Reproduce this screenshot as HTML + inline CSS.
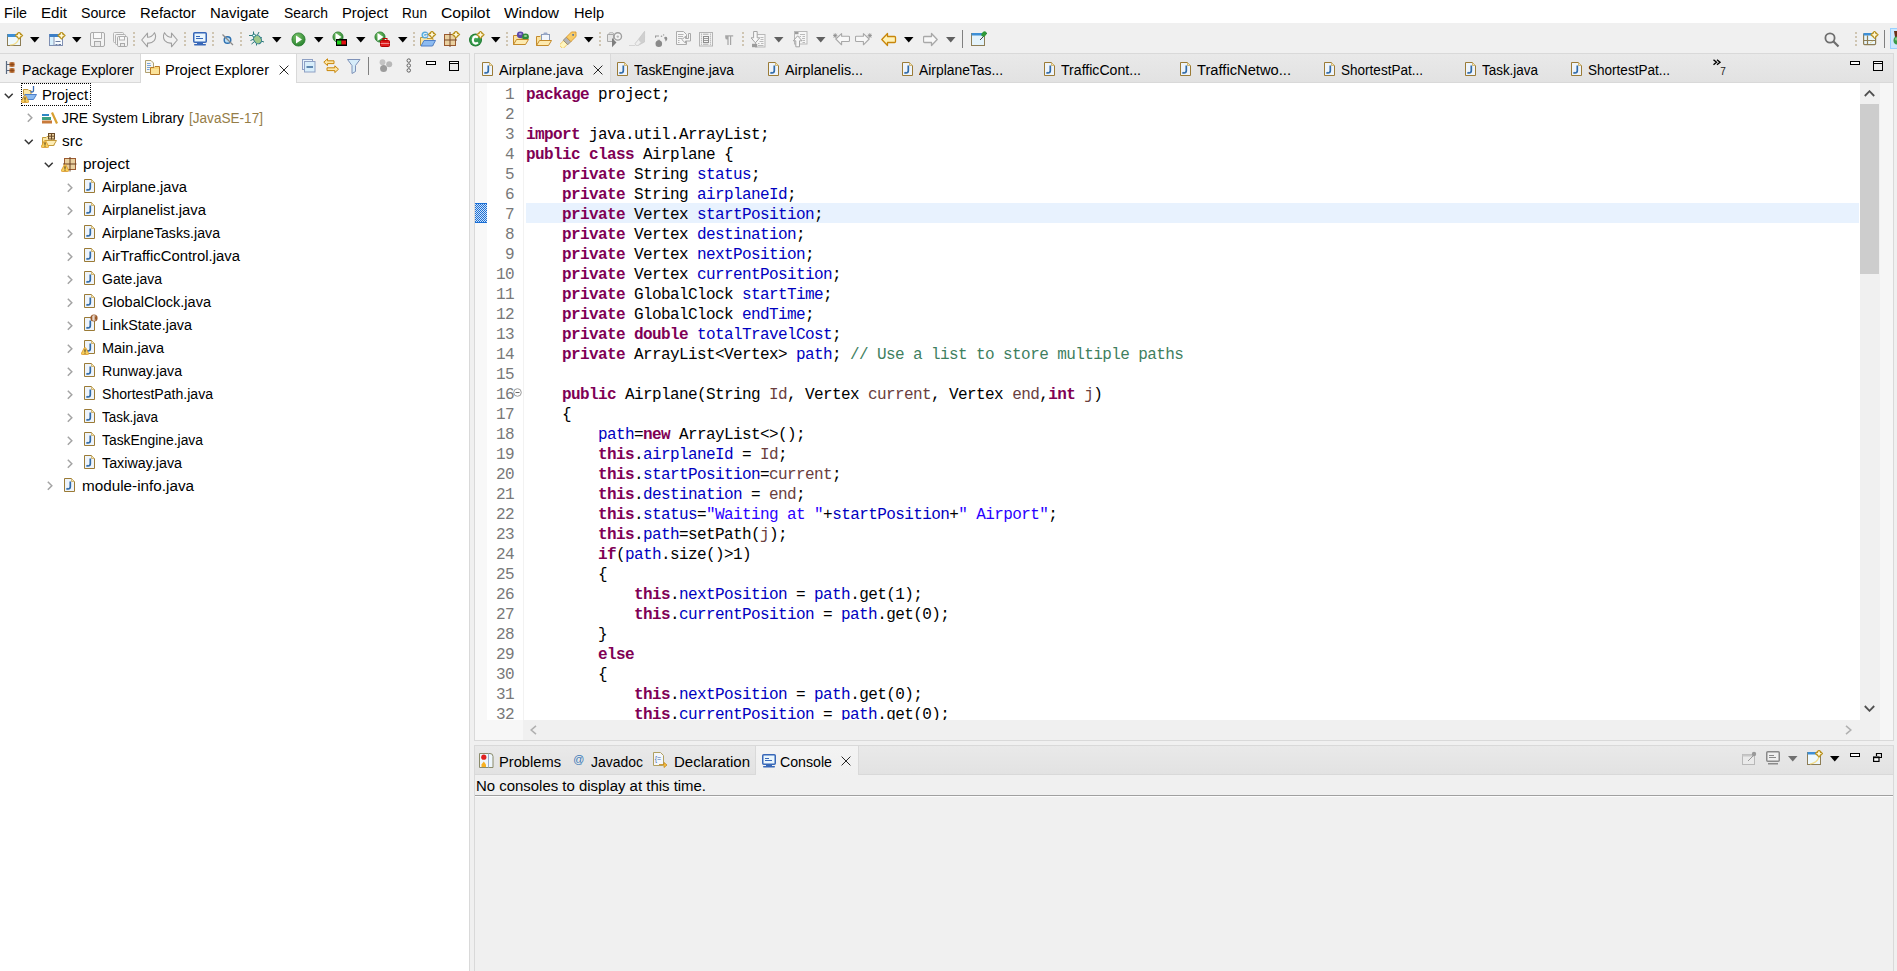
<!DOCTYPE html>
<html><head><meta charset="utf-8"><style>
html,body{margin:0;padding:0;width:1897px;height:971px;overflow:hidden;background:#f0f0f0;font-family:"Liberation Sans",sans-serif}
body>div,body>svg{position:absolute}
</style></head><body>
<div style="left:0px;top:0px;width:1897px;height:23px;background:#fff"></div>
<div style="left:4px;top:5px;font:normal 15.5px 'Liberation Sans';line-height:15.5px;color:#000;white-space:pre;transform:scaleX(0.9209);transform-origin:0 0">File</div>
<div style="left:41px;top:5px;font:normal 15.5px 'Liberation Sans';line-height:15.5px;color:#000;white-space:pre;transform:scaleX(0.9735);transform-origin:0 0">Edit</div>
<div style="left:81px;top:5px;font:normal 15.5px 'Liberation Sans';line-height:15.5px;color:#000;white-space:pre;transform:scaleX(0.9163);transform-origin:0 0">Source</div>
<div style="left:140px;top:5px;font:normal 15.5px 'Liberation Sans';line-height:15.5px;color:#000;white-space:pre;transform:scaleX(0.9560);transform-origin:0 0">Refactor</div>
<div style="left:210px;top:5px;font:normal 15.5px 'Liberation Sans';line-height:15.5px;color:#000;white-space:pre;transform:scaleX(0.9644);transform-origin:0 0">Navigate</div>
<div style="left:284px;top:5px;font:normal 15.5px 'Liberation Sans';line-height:15.5px;color:#000;white-space:pre;transform:scaleX(0.8959);transform-origin:0 0">Search</div>
<div style="left:342px;top:5px;font:normal 15.5px 'Liberation Sans';line-height:15.5px;color:#000;white-space:pre;transform:scaleX(0.9536);transform-origin:0 0">Project</div>
<div style="left:402px;top:5px;font:normal 15.5px 'Liberation Sans';line-height:15.5px;color:#000;white-space:pre;transform:scaleX(0.8792);transform-origin:0 0">Run</div>
<div style="left:441px;top:5px;font:normal 15.5px 'Liberation Sans';line-height:15.5px;color:#000;white-space:pre;transform:scaleX(1.0156);transform-origin:0 0">Copilot</div>
<div style="left:504px;top:5px;font:normal 15.5px 'Liberation Sans';line-height:15.5px;color:#000;white-space:pre;transform:scaleX(0.9977);transform-origin:0 0">Window</div>
<div style="left:574px;top:5px;font:normal 15.5px 'Liberation Sans';line-height:15.5px;color:#000;white-space:pre;transform:scaleX(0.9411);transform-origin:0 0">Help</div>
<div style="left:0px;top:23px;width:1897px;height:30px;background:#f0f0f0"></div>
<div style="left:0px;top:53px;width:470px;height:918px;background:#f0f0f0"></div>
<div style="left:0px;top:53px;width:470px;height:1px;background:#d9d9d9"></div>
<div style="left:469px;top:53px;width:1px;height:918px;background:#d9d9d9"></div>
<div style="left:0px;top:83px;width:469px;height:888px;background:#fff"></div>
<div style="left:0px;top:82px;width:469px;height:1px;background:#d9d9d9"></div>
<div style="left:140px;top:54px;width:1px;height:28px;background:#d9d9d9"></div>
<div style="left:141px;top:54px;width:155px;height:29px;background:#fff"></div>
<div style="left:296px;top:54px;width:1px;height:28px;background:#d9d9d9"></div>
<div style="left:22px;top:62px;font:normal 15.5px 'Liberation Sans';line-height:15.5px;color:#000;white-space:pre;transform:scaleX(0.9155);transform-origin:0 0">Package Explorer</div>
<div style="left:165px;top:62px;font:normal 15.5px 'Liberation Sans';line-height:15.5px;color:#000;white-space:pre;transform:scaleX(0.9432);transform-origin:0 0">Project Explorer</div>
<div style="left:474px;top:53px;width:1420px;height:688px;background:#d9d9d9"></div>
<div style="left:475px;top:54px;width:1418px;height:686px;background:#e8e8e8"></div>
<div style="left:475px;top:54px;width:1418px;height:28px;background:linear-gradient(#e9e9e9,#e2e2e2)"></div>
<div style="left:475px;top:83px;width:1418px;height:657px;background:#f7f7f7"></div>
<div style="left:475px;top:54px;width:135px;height:29px;background:#f0f0f0"></div>
<div style="left:610px;top:54px;width:1px;height:28px;background:#d9d9d9"></div>
<div style="left:475px;top:82px;width:1418px;height:1px;background:#d9d9d9"></div>
<div style="left:475px;top:83px;width:12px;height:637px;background:#f8f8f8"></div>
<div style="left:487px;top:83px;width:36px;height:637px;background:#fff"></div>
<div style="left:523px;top:83px;width:1px;height:637px;background:#f2f2f2"></div>
<div style="left:524px;top:83px;width:1336px;height:637px;background:#fff"></div>
<div style="left:526px;top:203px;width:1333px;height:20px;background:#e8f2fe"></div>
<div style="left:523px;top:720px;width:1337px;height:20px;background:#f0f0f0"></div>
<div style="left:1860px;top:83px;width:20px;height:657px;background:#f0f0f0"></div>
<div style="left:1860px;top:104px;width:19px;height:170px;background:#cdcdcd"></div>
<div style="left:1880px;top:83px;width:13px;height:657px;background:#f6f6f6"></div>
<div style="left:499px;top:62px;font:normal 15.5px 'Liberation Sans';line-height:15.5px;color:#000;white-space:pre;transform:scaleX(0.9374);transform-origin:0 0">Airplane.java</div>
<div style="left:634px;top:62px;font:normal 15.5px 'Liberation Sans';line-height:15.5px;color:#000;white-space:pre;transform:scaleX(0.8859);transform-origin:0 0">TaskEngine.java</div>
<div style="left:785px;top:62px;font:normal 15.5px 'Liberation Sans';line-height:15.5px;color:#000;white-space:pre;transform:scaleX(0.9239);transform-origin:0 0">Airplanelis...</div>
<div style="left:919px;top:62px;font:normal 15.5px 'Liberation Sans';line-height:15.5px;color:#000;white-space:pre;transform:scaleX(0.8945);transform-origin:0 0">AirplaneTas...</div>
<div style="left:1061px;top:62px;font:normal 15.5px 'Liberation Sans';line-height:15.5px;color:#000;white-space:pre;transform:scaleX(0.9105);transform-origin:0 0">TrafficCont...</div>
<div style="left:1197px;top:62px;font:normal 15.5px 'Liberation Sans';line-height:15.5px;color:#000;white-space:pre;transform:scaleX(0.9490);transform-origin:0 0">TrafficNetwo...</div>
<div style="left:1341px;top:62px;font:normal 15.5px 'Liberation Sans';line-height:15.5px;color:#000;white-space:pre;transform:scaleX(0.8732);transform-origin:0 0">ShortestPat...</div>
<div style="left:1482px;top:62px;font:normal 15.5px 'Liberation Sans';line-height:15.5px;color:#000;white-space:pre;transform:scaleX(0.8667);transform-origin:0 0">Task.java</div>
<div style="left:1588px;top:62px;font:normal 15.5px 'Liberation Sans';line-height:15.5px;color:#000;white-space:pre;transform:scaleX(0.8732);transform-origin:0 0">ShortestPat...</div>
<div style="left:474px;top:745px;width:1420px;height:226px;background:#d9d9d9"></div>
<div style="left:475px;top:746px;width:1418px;height:225px;background:#f0f0f0"></div>
<div style="left:475px;top:746px;width:1418px;height:29px;background:linear-gradient(#e9e9e9,#e2e2e2)"></div>
<div style="left:475px;top:774px;width:1418px;height:1px;background:#d9d9d9"></div>
<div style="left:755px;top:746px;width:1px;height:28px;background:#d9d9d9"></div>
<div style="left:858px;top:746px;width:1px;height:28px;background:#d9d9d9"></div>
<div style="left:756px;top:746px;width:102px;height:29px;background:linear-gradient(#f3f3f3,#f0f0f0)"></div>
<div style="left:475px;top:795px;width:1418px;height:1px;background:#a0a0a0"></div>
<div style="left:475px;top:796px;width:1418px;height:1px;background:#fcfcfc"></div>
<div style="left:499px;top:754px;font:normal 15.5px 'Liberation Sans';line-height:15.5px;color:#000;white-space:pre;transform:scaleX(0.9471);transform-origin:0 0">Problems</div>
<div style="left:591px;top:754px;font:normal 15.5px 'Liberation Sans';line-height:15.5px;color:#000;white-space:pre;transform:scaleX(0.9007);transform-origin:0 0">Javadoc</div>
<div style="left:674px;top:754px;font:normal 15.5px 'Liberation Sans';line-height:15.5px;color:#000;white-space:pre;transform:scaleX(0.9694);transform-origin:0 0">Declaration</div>
<div style="left:780px;top:754px;font:normal 15.5px 'Liberation Sans';line-height:15.5px;color:#000;white-space:pre;transform:scaleX(0.9144);transform-origin:0 0">Console</div>
<div style="left:476px;top:778px;font:normal 15.5px 'Liberation Sans';line-height:15.5px;color:#000;white-space:pre;transform:scaleX(0.9638);transform-origin:0 0">No consoles to display at this time.</div>
<div style="left:42px;top:87px;font:normal 15.5px 'Liberation Sans';line-height:15.5px;color:#000;white-space:pre;transform:scaleX(0.9536);transform-origin:0 0">Project</div>
<div style="left:62px;top:110px;font:normal 15.5px 'Liberation Sans';line-height:15.5px;color:#000;white-space:pre;transform:scaleX(0.8908);transform-origin:0 0">JRE System Library</div>
<div style="left:62px;top:133px;font:normal 15.5px 'Liberation Sans';line-height:15.5px;color:#000;white-space:pre">src</div>
<div style="left:83px;top:156px;font:normal 15.5px 'Liberation Sans';line-height:15.5px;color:#000;white-space:pre">project</div>
<div style="left:102px;top:179px;font:normal 15.5px 'Liberation Sans';line-height:15.5px;color:#000;white-space:pre;transform:scaleX(0.9486);transform-origin:0 0">Airplane.java</div>
<div style="left:102px;top:202px;font:normal 15.5px 'Liberation Sans';line-height:15.5px;color:#000;white-space:pre;transform:scaleX(0.9581);transform-origin:0 0">Airplanelist.java</div>
<div style="left:102px;top:225px;font:normal 15.5px 'Liberation Sans';line-height:15.5px;color:#000;white-space:pre;transform:scaleX(0.9131);transform-origin:0 0">AirplaneTasks.java</div>
<div style="left:102px;top:248px;font:normal 15.5px 'Liberation Sans';line-height:15.5px;color:#000;white-space:pre;transform:scaleX(0.9593);transform-origin:0 0">AirTrafficControl.java</div>
<div style="left:102px;top:271px;font:normal 15.5px 'Liberation Sans';line-height:15.5px;color:#000;white-space:pre;transform:scaleX(0.9044);transform-origin:0 0">Gate.java</div>
<div style="left:102px;top:294px;font:normal 15.5px 'Liberation Sans';line-height:15.5px;color:#000;white-space:pre;transform:scaleX(0.9372);transform-origin:0 0">GlobalClock.java</div>
<div style="left:102px;top:317px;font:normal 15.5px 'Liberation Sans';line-height:15.5px;color:#000;white-space:pre;transform:scaleX(0.9243);transform-origin:0 0">LinkState.java</div>
<div style="left:102px;top:340px;font:normal 15.5px 'Liberation Sans';line-height:15.5px;color:#000;white-space:pre;transform:scaleX(0.9346);transform-origin:0 0">Main.java</div>
<div style="left:102px;top:363px;font:normal 15.5px 'Liberation Sans';line-height:15.5px;color:#000;white-space:pre;transform:scaleX(0.9134);transform-origin:0 0">Runway.java</div>
<div style="left:102px;top:386px;font:normal 15.5px 'Liberation Sans';line-height:15.5px;color:#000;white-space:pre;transform:scaleX(0.9072);transform-origin:0 0">ShortestPath.java</div>
<div style="left:102px;top:409px;font:normal 15.5px 'Liberation Sans';line-height:15.5px;color:#000;white-space:pre;transform:scaleX(0.8667);transform-origin:0 0">Task.java</div>
<div style="left:102px;top:432px;font:normal 15.5px 'Liberation Sans';line-height:15.5px;color:#000;white-space:pre;transform:scaleX(0.8948);transform-origin:0 0">TaskEngine.java</div>
<div style="left:102px;top:455px;font:normal 15.5px 'Liberation Sans';line-height:15.5px;color:#000;white-space:pre;transform:scaleX(0.9225);transform-origin:0 0">Taxiway.java</div>
<div style="left:82px;top:478px;font:normal 15.5px 'Liberation Sans';line-height:15.5px;color:#000;white-space:pre;transform:scaleX(0.9848);transform-origin:0 0">module-info.java</div>
<div style="left:189px;top:110px;font:normal 15.5px 'Liberation Sans';line-height:15.5px;color:#957d47;white-space:pre;transform:scaleX(0.8764);transform-origin:0 0">[JavaSE-17]</div>
<div style="left:475px;top:83px;width:1385px;height:637px;overflow:hidden"><div style="position:absolute;left:51px;top:2px;height:20px;white-space:pre;font-family:'Liberation Mono';font-size:16px;letter-spacing:-0.6px;line-height:20px"><span style="color:#7f0055;font-weight:bold">package</span><span style="color:#000"> project;</span></div><div style="position:absolute;left:30px;top:2px;white-space:pre;color:#787878;font-family:'Liberation Mono';font-size:16px;letter-spacing:-0.6px;line-height:20px">1</div><div style="position:absolute;left:51px;top:22px;height:20px;white-space:pre;font-family:'Liberation Mono';font-size:16px;letter-spacing:-0.6px;line-height:20px"></div><div style="position:absolute;left:30px;top:22px;white-space:pre;color:#787878;font-family:'Liberation Mono';font-size:16px;letter-spacing:-0.6px;line-height:20px">2</div><div style="position:absolute;left:51px;top:42px;height:20px;white-space:pre;font-family:'Liberation Mono';font-size:16px;letter-spacing:-0.6px;line-height:20px"><span style="color:#7f0055;font-weight:bold">import</span><span style="color:#000"> java.util.ArrayList;</span></div><div style="position:absolute;left:30px;top:42px;white-space:pre;color:#787878;font-family:'Liberation Mono';font-size:16px;letter-spacing:-0.6px;line-height:20px">3</div><div style="position:absolute;left:51px;top:62px;height:20px;white-space:pre;font-family:'Liberation Mono';font-size:16px;letter-spacing:-0.6px;line-height:20px"><span style="color:#7f0055;font-weight:bold">public</span><span style="color:#000"> </span><span style="color:#7f0055;font-weight:bold">class</span><span style="color:#000"> Airplane {</span></div><div style="position:absolute;left:30px;top:62px;white-space:pre;color:#787878;font-family:'Liberation Mono';font-size:16px;letter-spacing:-0.6px;line-height:20px">4</div><div style="position:absolute;left:51px;top:82px;height:20px;white-space:pre;font-family:'Liberation Mono';font-size:16px;letter-spacing:-0.6px;line-height:20px"><span style="color:#000">    </span><span style="color:#7f0055;font-weight:bold">private</span><span style="color:#000"> String </span><span style="color:#0000c0">status</span><span style="color:#000">;</span></div><div style="position:absolute;left:30px;top:82px;white-space:pre;color:#787878;font-family:'Liberation Mono';font-size:16px;letter-spacing:-0.6px;line-height:20px">5</div><div style="position:absolute;left:51px;top:102px;height:20px;white-space:pre;font-family:'Liberation Mono';font-size:16px;letter-spacing:-0.6px;line-height:20px"><span style="color:#000">    </span><span style="color:#7f0055;font-weight:bold">private</span><span style="color:#000"> String </span><span style="color:#0000c0">airplaneId</span><span style="color:#000">;</span></div><div style="position:absolute;left:30px;top:102px;white-space:pre;color:#787878;font-family:'Liberation Mono';font-size:16px;letter-spacing:-0.6px;line-height:20px">6</div><div style="position:absolute;left:51px;top:122px;height:20px;white-space:pre;font-family:'Liberation Mono';font-size:16px;letter-spacing:-0.6px;line-height:20px"><span style="color:#000">    </span><span style="color:#7f0055;font-weight:bold">private</span><span style="color:#000"> Vertex </span><span style="color:#0000c0">startPosition</span><span style="color:#000">;</span></div><div style="position:absolute;left:30px;top:122px;white-space:pre;color:#787878;font-family:'Liberation Mono';font-size:16px;letter-spacing:-0.6px;line-height:20px">7</div><div style="position:absolute;left:51px;top:142px;height:20px;white-space:pre;font-family:'Liberation Mono';font-size:16px;letter-spacing:-0.6px;line-height:20px"><span style="color:#000">    </span><span style="color:#7f0055;font-weight:bold">private</span><span style="color:#000"> Vertex </span><span style="color:#0000c0">destination</span><span style="color:#000">;</span></div><div style="position:absolute;left:30px;top:142px;white-space:pre;color:#787878;font-family:'Liberation Mono';font-size:16px;letter-spacing:-0.6px;line-height:20px">8</div><div style="position:absolute;left:51px;top:162px;height:20px;white-space:pre;font-family:'Liberation Mono';font-size:16px;letter-spacing:-0.6px;line-height:20px"><span style="color:#000">    </span><span style="color:#7f0055;font-weight:bold">private</span><span style="color:#000"> Vertex </span><span style="color:#0000c0">nextPosition</span><span style="color:#000">;</span></div><div style="position:absolute;left:30px;top:162px;white-space:pre;color:#787878;font-family:'Liberation Mono';font-size:16px;letter-spacing:-0.6px;line-height:20px">9</div><div style="position:absolute;left:51px;top:182px;height:20px;white-space:pre;font-family:'Liberation Mono';font-size:16px;letter-spacing:-0.6px;line-height:20px"><span style="color:#000">    </span><span style="color:#7f0055;font-weight:bold">private</span><span style="color:#000"> Vertex </span><span style="color:#0000c0">currentPosition</span><span style="color:#000">;</span></div><div style="position:absolute;left:21px;top:182px;white-space:pre;color:#787878;font-family:'Liberation Mono';font-size:16px;letter-spacing:-0.6px;line-height:20px">10</div><div style="position:absolute;left:51px;top:202px;height:20px;white-space:pre;font-family:'Liberation Mono';font-size:16px;letter-spacing:-0.6px;line-height:20px"><span style="color:#000">    </span><span style="color:#7f0055;font-weight:bold">private</span><span style="color:#000"> GlobalClock </span><span style="color:#0000c0">startTime</span><span style="color:#000">;</span></div><div style="position:absolute;left:21px;top:202px;white-space:pre;color:#787878;font-family:'Liberation Mono';font-size:16px;letter-spacing:-0.6px;line-height:20px">11</div><div style="position:absolute;left:51px;top:222px;height:20px;white-space:pre;font-family:'Liberation Mono';font-size:16px;letter-spacing:-0.6px;line-height:20px"><span style="color:#000">    </span><span style="color:#7f0055;font-weight:bold">private</span><span style="color:#000"> GlobalClock </span><span style="color:#0000c0">endTime</span><span style="color:#000">;</span></div><div style="position:absolute;left:21px;top:222px;white-space:pre;color:#787878;font-family:'Liberation Mono';font-size:16px;letter-spacing:-0.6px;line-height:20px">12</div><div style="position:absolute;left:51px;top:242px;height:20px;white-space:pre;font-family:'Liberation Mono';font-size:16px;letter-spacing:-0.6px;line-height:20px"><span style="color:#000">    </span><span style="color:#7f0055;font-weight:bold">private</span><span style="color:#000"> </span><span style="color:#7f0055;font-weight:bold">double</span><span style="color:#000"> </span><span style="color:#0000c0">totalTravelCost</span><span style="color:#000">;</span></div><div style="position:absolute;left:21px;top:242px;white-space:pre;color:#787878;font-family:'Liberation Mono';font-size:16px;letter-spacing:-0.6px;line-height:20px">13</div><div style="position:absolute;left:51px;top:262px;height:20px;white-space:pre;font-family:'Liberation Mono';font-size:16px;letter-spacing:-0.6px;line-height:20px"><span style="color:#000">    </span><span style="color:#7f0055;font-weight:bold">private</span><span style="color:#000"> ArrayList&lt;Vertex&gt; </span><span style="color:#0000c0">path</span><span style="color:#000">; </span><span style="color:#3f7f5f">// Use a list to store multiple paths</span></div><div style="position:absolute;left:21px;top:262px;white-space:pre;color:#787878;font-family:'Liberation Mono';font-size:16px;letter-spacing:-0.6px;line-height:20px">14</div><div style="position:absolute;left:51px;top:282px;height:20px;white-space:pre;font-family:'Liberation Mono';font-size:16px;letter-spacing:-0.6px;line-height:20px"></div><div style="position:absolute;left:21px;top:282px;white-space:pre;color:#787878;font-family:'Liberation Mono';font-size:16px;letter-spacing:-0.6px;line-height:20px">15</div><div style="position:absolute;left:51px;top:302px;height:20px;white-space:pre;font-family:'Liberation Mono';font-size:16px;letter-spacing:-0.6px;line-height:20px"><span style="color:#000">    </span><span style="color:#7f0055;font-weight:bold">public</span><span style="color:#000"> Airplane(String </span><span style="color:#6a3e3e">Id</span><span style="color:#000">, Vertex </span><span style="color:#6a3e3e">current</span><span style="color:#000">, Vertex </span><span style="color:#6a3e3e">end</span><span style="color:#000">,</span><span style="color:#7f0055;font-weight:bold">int</span><span style="color:#000"> </span><span style="color:#6a3e3e">j</span><span style="color:#000">)</span></div><div style="position:absolute;left:21px;top:302px;white-space:pre;color:#787878;font-family:'Liberation Mono';font-size:16px;letter-spacing:-0.6px;line-height:20px">16</div><div style="position:absolute;left:51px;top:322px;height:20px;white-space:pre;font-family:'Liberation Mono';font-size:16px;letter-spacing:-0.6px;line-height:20px"><span style="color:#000">    {</span></div><div style="position:absolute;left:21px;top:322px;white-space:pre;color:#787878;font-family:'Liberation Mono';font-size:16px;letter-spacing:-0.6px;line-height:20px">17</div><div style="position:absolute;left:51px;top:342px;height:20px;white-space:pre;font-family:'Liberation Mono';font-size:16px;letter-spacing:-0.6px;line-height:20px"><span style="color:#000">        </span><span style="color:#0000c0">path</span><span style="color:#000">=</span><span style="color:#7f0055;font-weight:bold">new</span><span style="color:#000"> ArrayList&lt;&gt;();</span></div><div style="position:absolute;left:21px;top:342px;white-space:pre;color:#787878;font-family:'Liberation Mono';font-size:16px;letter-spacing:-0.6px;line-height:20px">18</div><div style="position:absolute;left:51px;top:362px;height:20px;white-space:pre;font-family:'Liberation Mono';font-size:16px;letter-spacing:-0.6px;line-height:20px"><span style="color:#000">        </span><span style="color:#7f0055;font-weight:bold">this</span><span style="color:#000">.</span><span style="color:#0000c0">airplaneId</span><span style="color:#000"> = </span><span style="color:#6a3e3e">Id</span><span style="color:#000">;</span></div><div style="position:absolute;left:21px;top:362px;white-space:pre;color:#787878;font-family:'Liberation Mono';font-size:16px;letter-spacing:-0.6px;line-height:20px">19</div><div style="position:absolute;left:51px;top:382px;height:20px;white-space:pre;font-family:'Liberation Mono';font-size:16px;letter-spacing:-0.6px;line-height:20px"><span style="color:#000">        </span><span style="color:#7f0055;font-weight:bold">this</span><span style="color:#000">.</span><span style="color:#0000c0">startPosition</span><span style="color:#000">=</span><span style="color:#6a3e3e">current</span><span style="color:#000">;</span></div><div style="position:absolute;left:21px;top:382px;white-space:pre;color:#787878;font-family:'Liberation Mono';font-size:16px;letter-spacing:-0.6px;line-height:20px">20</div><div style="position:absolute;left:51px;top:402px;height:20px;white-space:pre;font-family:'Liberation Mono';font-size:16px;letter-spacing:-0.6px;line-height:20px"><span style="color:#000">        </span><span style="color:#7f0055;font-weight:bold">this</span><span style="color:#000">.</span><span style="color:#0000c0">destination</span><span style="color:#000"> = </span><span style="color:#6a3e3e">end</span><span style="color:#000">;</span></div><div style="position:absolute;left:21px;top:402px;white-space:pre;color:#787878;font-family:'Liberation Mono';font-size:16px;letter-spacing:-0.6px;line-height:20px">21</div><div style="position:absolute;left:51px;top:422px;height:20px;white-space:pre;font-family:'Liberation Mono';font-size:16px;letter-spacing:-0.6px;line-height:20px"><span style="color:#000">        </span><span style="color:#7f0055;font-weight:bold">this</span><span style="color:#000">.</span><span style="color:#0000c0">status</span><span style="color:#000">=</span><span style="color:#2a00ff">&quot;Waiting at &quot;</span><span style="color:#000">+</span><span style="color:#0000c0">startPosition</span><span style="color:#000">+</span><span style="color:#2a00ff">&quot; Airport&quot;</span><span style="color:#000">;</span></div><div style="position:absolute;left:21px;top:422px;white-space:pre;color:#787878;font-family:'Liberation Mono';font-size:16px;letter-spacing:-0.6px;line-height:20px">22</div><div style="position:absolute;left:51px;top:442px;height:20px;white-space:pre;font-family:'Liberation Mono';font-size:16px;letter-spacing:-0.6px;line-height:20px"><span style="color:#000">        </span><span style="color:#7f0055;font-weight:bold">this</span><span style="color:#000">.</span><span style="color:#0000c0">path</span><span style="color:#000">=setPath(</span><span style="color:#6a3e3e">j</span><span style="color:#000">);</span></div><div style="position:absolute;left:21px;top:442px;white-space:pre;color:#787878;font-family:'Liberation Mono';font-size:16px;letter-spacing:-0.6px;line-height:20px">23</div><div style="position:absolute;left:51px;top:462px;height:20px;white-space:pre;font-family:'Liberation Mono';font-size:16px;letter-spacing:-0.6px;line-height:20px"><span style="color:#000">        </span><span style="color:#7f0055;font-weight:bold">if</span><span style="color:#000">(</span><span style="color:#0000c0">path</span><span style="color:#000">.size()&gt;1)</span></div><div style="position:absolute;left:21px;top:462px;white-space:pre;color:#787878;font-family:'Liberation Mono';font-size:16px;letter-spacing:-0.6px;line-height:20px">24</div><div style="position:absolute;left:51px;top:482px;height:20px;white-space:pre;font-family:'Liberation Mono';font-size:16px;letter-spacing:-0.6px;line-height:20px"><span style="color:#000">        {</span></div><div style="position:absolute;left:21px;top:482px;white-space:pre;color:#787878;font-family:'Liberation Mono';font-size:16px;letter-spacing:-0.6px;line-height:20px">25</div><div style="position:absolute;left:51px;top:502px;height:20px;white-space:pre;font-family:'Liberation Mono';font-size:16px;letter-spacing:-0.6px;line-height:20px"><span style="color:#000">            </span><span style="color:#7f0055;font-weight:bold">this</span><span style="color:#000">.</span><span style="color:#0000c0">nextPosition</span><span style="color:#000"> = </span><span style="color:#0000c0">path</span><span style="color:#000">.get(1);</span></div><div style="position:absolute;left:21px;top:502px;white-space:pre;color:#787878;font-family:'Liberation Mono';font-size:16px;letter-spacing:-0.6px;line-height:20px">26</div><div style="position:absolute;left:51px;top:522px;height:20px;white-space:pre;font-family:'Liberation Mono';font-size:16px;letter-spacing:-0.6px;line-height:20px"><span style="color:#000">            </span><span style="color:#7f0055;font-weight:bold">this</span><span style="color:#000">.</span><span style="color:#0000c0">currentPosition</span><span style="color:#000"> = </span><span style="color:#0000c0">path</span><span style="color:#000">.get(0);</span></div><div style="position:absolute;left:21px;top:522px;white-space:pre;color:#787878;font-family:'Liberation Mono';font-size:16px;letter-spacing:-0.6px;line-height:20px">27</div><div style="position:absolute;left:51px;top:542px;height:20px;white-space:pre;font-family:'Liberation Mono';font-size:16px;letter-spacing:-0.6px;line-height:20px"><span style="color:#000">        }</span></div><div style="position:absolute;left:21px;top:542px;white-space:pre;color:#787878;font-family:'Liberation Mono';font-size:16px;letter-spacing:-0.6px;line-height:20px">28</div><div style="position:absolute;left:51px;top:562px;height:20px;white-space:pre;font-family:'Liberation Mono';font-size:16px;letter-spacing:-0.6px;line-height:20px"><span style="color:#000">        </span><span style="color:#7f0055;font-weight:bold">else</span></div><div style="position:absolute;left:21px;top:562px;white-space:pre;color:#787878;font-family:'Liberation Mono';font-size:16px;letter-spacing:-0.6px;line-height:20px">29</div><div style="position:absolute;left:51px;top:582px;height:20px;white-space:pre;font-family:'Liberation Mono';font-size:16px;letter-spacing:-0.6px;line-height:20px"><span style="color:#000">        {</span></div><div style="position:absolute;left:21px;top:582px;white-space:pre;color:#787878;font-family:'Liberation Mono';font-size:16px;letter-spacing:-0.6px;line-height:20px">30</div><div style="position:absolute;left:51px;top:602px;height:20px;white-space:pre;font-family:'Liberation Mono';font-size:16px;letter-spacing:-0.6px;line-height:20px"><span style="color:#000">            </span><span style="color:#7f0055;font-weight:bold">this</span><span style="color:#000">.</span><span style="color:#0000c0">nextPosition</span><span style="color:#000"> = </span><span style="color:#0000c0">path</span><span style="color:#000">.get(0);</span></div><div style="position:absolute;left:21px;top:602px;white-space:pre;color:#787878;font-family:'Liberation Mono';font-size:16px;letter-spacing:-0.6px;line-height:20px">31</div><div style="position:absolute;left:51px;top:622px;height:20px;white-space:pre;font-family:'Liberation Mono';font-size:16px;letter-spacing:-0.6px;line-height:20px"><span style="color:#000">            </span><span style="color:#7f0055;font-weight:bold">this</span><span style="color:#000">.</span><span style="color:#0000c0">currentPosition</span><span style="color:#000"> = </span><span style="color:#0000c0">path</span><span style="color:#000">.get(0);</span></div><div style="position:absolute;left:21px;top:622px;white-space:pre;color:#787878;font-family:'Liberation Mono';font-size:16px;letter-spacing:-0.6px;line-height:20px">32</div></div>
<svg style="left:7px;top:32px" width="17" height="16" viewBox="0 0 17 16"><rect x="0.5" y="2.5" width="13" height="11" fill="#eef8fd" stroke="#8d7d55"/><rect x="0.5" y="2" width="13" height="3" fill="#3d8fd6"/><path d="M3 13Q10 13 12 6" stroke="#f2dc8a" stroke-width="1.2" fill="none"/><path d="M12 -0.7999999999999998L16.3 3.5L12 7.8L7.7 3.5Z" fill="#b8901c"/><path d="M12 0.40000000000000013Q12.5 3.0 15.100000000000001 3.5Q12.5 4.0 12 6.6Q11.5 4.0 8.9 3.5Q11.5 3.0 12 0.40000000000000013Z" fill="#fff8d8"/></svg>
<svg style="left:30px;top:37px" width="10" height="6" viewBox="0 0 10 6"><path d="M0 0H9.5L4.75 5.5Z" fill="#000"/></svg>
<svg style="left:49px;top:32px" width="17" height="16" viewBox="0 0 17 16"><rect x="0.5" y="2.5" width="13" height="11" fill="#f8fcff" stroke="#7f8fb2"/><rect x="0.5" y="2" width="13" height="3" fill="#3d7fc6"/><rect x="1" y="5" width="3.5" height="8" fill="#d8f0fc"/><rect x="4.5" y="5" width="1" height="8.5" fill="#7f8fb2"/><rect x="6.5" y="9" width="5" height="1" fill="#6a7ca0"/><rect x="6.5" y="12" width="2" height="1" fill="#6a7ca0"/><rect x="9.5" y="12" width="2.5" height="1" fill="#6a7ca0"/><path d="M12.5 -0.7999999999999998L16.8 3.5L12.5 7.8L8.2 3.5Z" fill="#b8901c"/><path d="M12.5 0.40000000000000013Q13.0 3.0 15.600000000000001 3.5Q13.0 4.0 12.5 6.6Q12.0 4.0 9.399999999999999 3.5Q12.0 3.0 12.5 0.40000000000000013Z" fill="#fff8d8"/></svg>
<svg style="left:72px;top:37px" width="10" height="6" viewBox="0 0 10 6"><path d="M0 0H9.5L4.75 5.5Z" fill="#000"/></svg>
<svg style="left:90px;top:32px" width="16" height="16" viewBox="0 0 16 16"><rect x="0.5" y="0.5" width="14" height="14" rx="1.5" fill="#f3f3f3" stroke="#a9a9a9"/><rect x="3.5" y="0.5" width="8" height="6" fill="#fafafa" stroke="#b0b0b0"/><rect x="4.5" y="9.5" width="6" height="5" fill="#e8e8e8" stroke="#a9a9a9"/></svg>
<svg style="left:113px;top:32px" width="16" height="16" viewBox="0 0 16 16"><rect x="0.5" y="0.5" width="10" height="10" rx="1" fill="#f3f3f3" stroke="#b5b5b5"/><rect x="2.5" y="2.5" width="10" height="10" rx="1" fill="#f3f3f3" stroke="#b0b0b0"/><rect x="4.5" y="4.5" width="10" height="10" rx="1.2" fill="#f3f3f3" stroke="#a9a9a9"/><rect x="6.5" y="4.5" width="5" height="3.5" fill="#fafafa" stroke="#b0b0b0"/><rect x="7.5" y="11.5" width="4" height="3" fill="#e8e8e8" stroke="#a9a9a9"/></svg>
<svg style="left:133px;top:32px" width="2" height="15" viewBox="0 0 2 15"><rect x="0" y="0" width="2" height="2" fill="#cfc5b2"/><rect x="0" y="4" width="2" height="2" fill="#cfc5b2"/><rect x="0" y="8" width="2" height="2" fill="#cfc5b2"/><rect x="0" y="12" width="2" height="2" fill="#cfc5b2"/></svg>
<svg style="left:141px;top:32px" width="16" height="16" viewBox="0 0 16 16"><g><path d="M0.7 8L6.5 1.2V5.3Q10.5 5.5 13.5 0.7Q15.8 5 13.2 8.6Q10.5 11.6 6.5 11V14.8Z" fill="#f2f2f2" stroke="#a0a0a0" stroke-width="1.1" stroke-linejoin="round"/></g></svg>
<svg style="left:163px;top:32px" width="16" height="16" viewBox="0 0 16 16"><g transform="translate(15 0) scale(-1 1)"><path d="M0.7 8L6.5 1.2V5.3Q10.5 5.5 13.5 0.7Q15.8 5 13.2 8.6Q10.5 11.6 6.5 11V14.8Z" fill="#f2f2f2" stroke="#a0a0a0" stroke-width="1.1" stroke-linejoin="round"/></g></svg>
<svg style="left:184px;top:32px" width="2" height="15" viewBox="0 0 2 15"><rect x="0" y="0" width="2" height="2" fill="#cfc5b2"/><rect x="0" y="4" width="2" height="2" fill="#cfc5b2"/><rect x="0" y="8" width="2" height="2" fill="#cfc5b2"/><rect x="0" y="12" width="2" height="2" fill="#cfc5b2"/></svg>
<svg style="left:193px;top:32px" width="14" height="14" viewBox="0 0 14 14"><rect x="0.75" y="0.75" width="12.5" height="9.5" rx="1" fill="#eaf6fd" stroke="#3767b8" stroke-width="1.5"/><rect x="3" y="4" width="4" height="1" fill="#3767b8"/><rect x="3" y="6" width="7" height="1" fill="#3767b8"/><rect x="4" y="11" width="6" height="1.5" fill="#3767b8"/><rect x="1" y="12" width="12" height="1.5" rx="0.7" fill="#3767b8"/></svg>
<svg style="left:212px;top:32px" width="2" height="15" viewBox="0 0 2 15"><rect x="0" y="0" width="2" height="2" fill="#cfc5b2"/><rect x="0" y="4" width="2" height="2" fill="#cfc5b2"/><rect x="0" y="8" width="2" height="2" fill="#cfc5b2"/><rect x="0" y="12" width="2" height="2" fill="#cfc5b2"/></svg>
<svg style="left:222px;top:34px" width="12" height="12" viewBox="0 0 12 12"><circle cx="5.5" cy="6" r="3.3" fill="#bfe0f4" stroke="#2d70b0" stroke-width="1.4"/><path d="M0.5 0.5L11 11" stroke="#8a8a8a" stroke-width="1.3"/></svg>
<svg style="left:240px;top:32px" width="2" height="15" viewBox="0 0 2 15"><rect x="0" y="0" width="2" height="2" fill="#cfc5b2"/><rect x="0" y="4" width="2" height="2" fill="#cfc5b2"/><rect x="0" y="8" width="2" height="2" fill="#cfc5b2"/><rect x="0" y="12" width="2" height="2" fill="#cfc5b2"/></svg>
<svg style="left:249px;top:31px" width="16" height="16" viewBox="0 0 16 16"><g stroke="#2c7a7a" stroke-width="1" fill="none"><path d="M4.5 0.5V4M10 1L8.5 4M0 4.5H5M1.5 9.5L5 8M2.5 13L5 11M7.5 14.5V12.5M13 6.5L11 7.5M15 11L12 10"/></g><ellipse cx="8.5" cy="8.5" rx="3.6" ry="4.6" transform="rotate(-35 8.5 8.5)" fill="#9fc98a" stroke="#2d7a8a"/><circle cx="5" cy="4.5" r="1.5" fill="#dff" stroke="#2c7a7a"/></svg>
<svg style="left:272px;top:37px" width="10" height="6" viewBox="0 0 10 6"><path d="M0 0H9.5L4.75 5.5Z" fill="#000"/></svg>
<svg style="left:291px;top:32px" width="15" height="15" viewBox="0 0 15 15"><defs><radialGradient id="gr291" cx="0.4" cy="0.3" r="0.8"><stop offset="0" stop-color="#7cc46a"/><stop offset="1" stop-color="#1d7a27"/></radialGradient></defs><circle cx="7.5" cy="7.5" r="6.6" fill="url(#gr291)" stroke="#2a7e30" stroke-width="0.8"/><path d="M5 3.5L11 7.5L5 11.5Z" fill="#fff"/></svg>
<svg style="left:314px;top:37px" width="10" height="6" viewBox="0 0 10 6"><path d="M0 0H9.5L4.75 5.5Z" fill="#000"/></svg>
<svg style="left:332px;top:31px" width="12.0" height="12.0" viewBox="0 0 12.0 12.0"><defs><radialGradient id="gr332" cx="0.4" cy="0.3" r="0.8"><stop offset="0" stop-color="#7cc46a"/><stop offset="1" stop-color="#1d7a27"/></radialGradient></defs><circle cx="6.0" cy="6.0" r="5.1" fill="url(#gr332)" stroke="#2a7e30" stroke-width="0.8"/><path d="M3.5 2.0L9.5 6.0L3.5 10.0Z" fill="#fff"/></svg>
<svg style="left:336px;top:39px" width="11" height="7" viewBox="0 0 11 7"><rect x="0" y="0" width="11" height="7" fill="#000"/><rect x="1" y="1.5" width="4.5" height="4" fill="#1ed01e"/><rect x="5.5" y="1.5" width="4.5" height="4" fill="#e01010"/></svg>
<svg style="left:356px;top:37px" width="10" height="6" viewBox="0 0 10 6"><path d="M0 0H9.5L4.75 5.5Z" fill="#000"/></svg>
<svg style="left:374px;top:31px" width="12.0" height="12.0" viewBox="0 0 12.0 12.0"><defs><radialGradient id="gr374" cx="0.4" cy="0.3" r="0.8"><stop offset="0" stop-color="#7cc46a"/><stop offset="1" stop-color="#1d7a27"/></radialGradient></defs><circle cx="6.0" cy="6.0" r="5.1" fill="url(#gr374)" stroke="#2a7e30" stroke-width="0.8"/><path d="M3.5 2.0L9.5 6.0L3.5 10.0Z" fill="#fff"/></svg>
<svg style="left:380px;top:38px" width="10" height="9" viewBox="0 0 10 9"><rect x="0.5" y="2.5" width="9" height="6" rx="1" fill="#e02020" stroke="#b00000"/><rect x="3" y="0.5" width="4" height="2.5" fill="none" stroke="#c00000"/><rect x="0.5" y="5" width="9" height="0.8" fill="#fff" opacity="0.6"/></svg>
<svg style="left:398px;top:37px" width="10" height="6" viewBox="0 0 10 6"><path d="M0 0H9.5L4.75 5.5Z" fill="#000"/></svg>
<svg style="left:413px;top:32px" width="2" height="15" viewBox="0 0 2 15"><rect x="0" y="0" width="2" height="2" fill="#cfc5b2"/><rect x="0" y="4" width="2" height="2" fill="#cfc5b2"/><rect x="0" y="8" width="2" height="2" fill="#cfc5b2"/><rect x="0" y="12" width="2" height="2" fill="#cfc5b2"/></svg>
<svg style="left:420px;top:31px" width="17" height="16" viewBox="0 0 17 16"><path d="M0.5 6.5H6L7 7.5H13V14.5H0.5Z" fill="#fbe7a6" stroke="#c49a3a"/><path d="M1 15L4 9.5H15.5L12.5 15Z" fill="#8dbbf0" stroke="#4f7fc8"/><circle cx="5" cy="4" r="3.5" fill="#5aa8d8"/><text x="5" y="6.3" font-size="6" font-weight="bold" text-anchor="middle" fill="#fff" font-family="Liberation Sans">G</text><path d="M12 -0.7999999999999998L16.3 3.5L12 7.8L7.7 3.5Z" fill="#b8901c"/><path d="M12 0.40000000000000013Q12.5 3.0 15.100000000000001 3.5Q12.5 4.0 12 6.6Q11.5 4.0 8.9 3.5Q11.5 3.0 12 0.40000000000000013Z" fill="#fff8d8"/></svg>
<svg style="left:444px;top:31px" width="17" height="16" viewBox="0 0 17 16"><rect x="0.5" y="3.5" width="11" height="11" fill="#e9d0a0" stroke="#9a5a30"/><path d="M6 1V16M0 9H13" stroke="#7a4a28" stroke-width="1"/><path d="M12 -0.7999999999999998L16.3 3.5L12 7.8L7.7 3.5Z" fill="#b8901c"/><path d="M12 0.40000000000000013Q12.5 3.0 15.100000000000001 3.5Q12.5 4.0 12 6.6Q11.5 4.0 8.9 3.5Q11.5 3.0 12 0.40000000000000013Z" fill="#fff8d8"/></svg>
<svg style="left:469px;top:31px" width="16" height="16" viewBox="0 0 16 16"><circle cx="6.5" cy="9" r="6.5" fill="#1f7a30"/><circle cx="6.5" cy="9" r="5.6" fill="#34984a"/><ellipse cx="6" cy="6.5" rx="3.5" ry="2.2" fill="#5cb86a" opacity="0.6"/><path d="M9 6.5Q6.5 4.5 4.5 6.5Q3 9 4.5 11.5Q6.5 13.5 9 11.5" stroke="#fff" stroke-width="2.2" fill="none"/><path d="M11.5 -0.5L15.8 3.8L11.5 8.1L7.2 3.8Z" fill="#b8901c"/><path d="M11.5 0.7Q12.0 3.3 14.600000000000001 3.8Q12.0 4.3 11.5 6.8999999999999995Q11.0 4.3 8.4 3.8Q11.0 3.3 11.5 0.7Z" fill="#fff8d8"/></svg>
<svg style="left:491px;top:37px" width="10" height="6" viewBox="0 0 10 6"><path d="M0 0H9.5L4.75 5.5Z" fill="#000"/></svg>
<svg style="left:506px;top:32px" width="2" height="15" viewBox="0 0 2 15"><rect x="0" y="0" width="2" height="2" fill="#cfc5b2"/><rect x="0" y="4" width="2" height="2" fill="#cfc5b2"/><rect x="0" y="8" width="2" height="2" fill="#cfc5b2"/><rect x="0" y="12" width="2" height="2" fill="#cfc5b2"/></svg>
<svg style="left:513px;top:31px" width="17" height="16" viewBox="0 0 17 16"><path d="M0.5 13.5V4.5H4L5 3.5H9V13.5Z" fill="#fbe3a0" stroke="#c48a2a"/><circle cx="7.3" cy="3.8" r="3.4" fill="#5a48a8"/><ellipse cx="7.3" cy="3" rx="1.6" ry="0.9" fill="#a8a0d8"/><circle cx="12.5" cy="5.8" r="3.4" fill="#2f8a3a"/><ellipse cx="12.5" cy="5" rx="1.6" ry="0.9" fill="#98d098"/><path d="M0.5 13.5L3.5 8.5H15.5L12.5 13.5Z" fill="#fdeab0" stroke="#c48a2a"/></svg>
<svg style="left:536px;top:32px" width="16" height="16" viewBox="0 0 16 16"><path d="M0.5 13.5V4.5H4L5 3.5H9V13.5Z" fill="#fbe3a0" stroke="#c48a2a"/><rect x="5.5" y="2.5" width="8" height="7" fill="#f2f6fc" stroke="#8a9ab8"/><rect x="7.5" y="0.5" width="4" height="2.5" rx="1" fill="#98a8c8"/><path d="M0.5 13.5L3.5 8.5H15.5L12.5 13.5Z" fill="#fdeab0" stroke="#c48a2a"/></svg>
<svg style="left:560px;top:31px" width="17" height="17" viewBox="0 0 17 17"><g transform="translate(8.5 8.5) rotate(-45)"><path d="M-10.5 -2.6H-4V2.6H-10.5Z" fill="#fff6c0" stroke="#f0c050" stroke-width="0.8"/><path d="M-4.2 -3.2H0.2V3.2H-4.2Z" fill="#b4b4b4" stroke="#8a7a5a" stroke-width="0.7"/><path d="M0.2 -3.2H7.5L10.6 0L7.5 3.2H0.2Z" fill="#f8cc68" stroke="#d8962a" stroke-width="0.8"/><circle cx="6.5" cy="0" r="0.9" fill="#3060b0"/></g></svg>
<svg style="left:584px;top:37px" width="10" height="6" viewBox="0 0 10 6"><path d="M0 0H9.5L4.75 5.5Z" fill="#000"/></svg>
<svg style="left:599px;top:32px" width="2" height="15" viewBox="0 0 2 15"><rect x="0" y="0" width="2" height="2" fill="#cfc5b2"/><rect x="0" y="4" width="2" height="2" fill="#cfc5b2"/><rect x="0" y="8" width="2" height="2" fill="#cfc5b2"/><rect x="0" y="12" width="2" height="2" fill="#cfc5b2"/></svg>
<svg style="left:607px;top:32px" width="16" height="16" viewBox="0 0 16 16"><path d="M0.5 2.5H6.5V9.5H0.5Z" fill="#e6e6e6" stroke="#a8a8a8"/><path d="M1.5 2.5L2.5 0.8H6L7 2.5" fill="none" stroke="#b0b0b0"/><circle cx="10.8" cy="4.4" r="3.7" fill="#f4f4f4" stroke="#a0a0a0" stroke-width="1.4"/><circle cx="10.8" cy="4.6" r="1.2" fill="#b8b8b8"/><path d="M5 6V15.2L9.5 10.6Z" fill="#7e7e7e"/></svg>
<svg style="left:629px;top:31px" width="17" height="16" viewBox="0 0 17 16"><path d="M15.6 0.3L15.5 11L9 14.5H7L6.3 12.5Z" fill="#cfcfcf" stroke="#c4c4c4" stroke-width="0.7"/><path d="M6.3 12.5L9.5 8.5L12 11.5L9 14.5H7Z" fill="#eeeeee" stroke="#d0d0d0" stroke-width="0.7"/><path d="M0 14.5H6" stroke="#d4d4d4"/></svg>
<svg style="left:655px;top:34px" width="14" height="14" viewBox="0 0 14 14"><circle cx="3.8" cy="9.8" r="3.3" fill="#8a8a8a"/><rect x="2.5" y="5.8" width="2.6" height="1" fill="#8a8a8a"/><path d="M0.5 3.8V2H4" stroke="#9a9a9a" stroke-width="1.1" fill="none"/><circle cx="6.5" cy="2.3" r="0.8" fill="#999"/><circle cx="8.6" cy="0.9" r="0.7" fill="#999"/><path d="M9.2 3.2Q11.8 2.2 12.3 4.2Q12.6 6.2 10.6 7.4Q9.8 6.6 10.6 5.9Q9.2 5.6 9.2 3.2Z" fill="#8e8e8e"/></svg>
<svg style="left:676px;top:31px" width="16" height="15" viewBox="0 0 16 15"><path d="M0.5 0.5H7.5L10.5 3.5V13.5H0.5Z" fill="#f6f6f6" stroke="#acacac"/><path d="M2 3.5H7.5M2 5.5H7M2 7.5H6.5M2 9.5H3.5M2 11.5H3.5" stroke="#b4b4b4"/><path d="M12.5 2.5H14.5V10H9.5V12.2L6 8.7L9.5 5.2V7.5H12.5Z" fill="#f6f6f6" stroke="#a8a8a8" stroke-linejoin="round"/></svg>
<svg style="left:699px;top:32px" width="15" height="15" viewBox="0 0 15 15"><rect x="0.5" y="0.5" width="13" height="13.5" fill="#f6f6f6" stroke="#b4b4b4"/><rect x="1.9" y="1.6" width="1.2" height="1.2" fill="#b0b0b0"/><rect x="10.9" y="1.6" width="1.2" height="1.2" fill="#b0b0b0"/><rect x="1.9" y="3.6" width="1.2" height="1.2" fill="#b0b0b0"/><rect x="10.9" y="3.6" width="1.2" height="1.2" fill="#b0b0b0"/><rect x="1.9" y="5.6" width="1.2" height="1.2" fill="#b0b0b0"/><rect x="10.9" y="5.6" width="1.2" height="1.2" fill="#b0b0b0"/><rect x="1.9" y="7.6" width="1.2" height="1.2" fill="#b0b0b0"/><rect x="10.9" y="7.6" width="1.2" height="1.2" fill="#b0b0b0"/><rect x="1.9" y="9.6" width="1.2" height="1.2" fill="#b0b0b0"/><rect x="10.9" y="9.6" width="1.2" height="1.2" fill="#b0b0b0"/><rect x="1.9" y="11.6" width="1.2" height="1.2" fill="#b0b0b0"/><rect x="10.9" y="11.6" width="1.2" height="1.2" fill="#b0b0b0"/><path d="M4 2.2H9.5M4 12.2H9.5" stroke="#aaa"/><rect x="4.5" y="4.5" width="5" height="6" fill="#f4f4f4" stroke="#8e8e8e"/><path d="M5 6.5H9M5 8.5H9" stroke="#9a9a9a"/></svg>
<svg style="left:725px;top:35px" width="9" height="11" viewBox="0 0 9 11"><path d="M0.2 0.2H8.2V1.4H6.2V10H5V1.4H3.6V10H2.4V4.6Q0.2 4.6 0.2 2.4Z" fill="#a6a6a6"/></svg>
<svg style="left:742px;top:32px" width="2" height="15" viewBox="0 0 2 15"><rect x="0" y="0" width="2" height="2" fill="#cfc5b2"/><rect x="0" y="4" width="2" height="2" fill="#cfc5b2"/><rect x="0" y="8" width="2" height="2" fill="#cfc5b2"/><rect x="0" y="12" width="2" height="2" fill="#cfc5b2"/></svg>
<svg style="left:751px;top:31px" width="16" height="17" viewBox="0 0 16 17"><rect x="4.5" y="3.5" width="9.5" height="12.5" fill="#f6f6f6" stroke="#b8b8b8"/><path d="M9.5 6.5H12.5M9.5 8.5H12.5M8.5 10.5H12.5M7 12.5H8.5M10 12.5H12.5M7 14.5H12.5" stroke="#bababa"/><path d="M2.6 0.5H6.2V6.8H8.8L4.4 11.8L0 6.8H2.6Z" fill="#f8f8f8" stroke="#a4a4a4" stroke-linejoin="round"/><rect x="1" y="12.8" width="5.2" height="3.4" fill="#9c9c9c"/></svg>
<svg style="left:774px;top:37px" width="10" height="6" viewBox="0 0 10 6"><path d="M0 0H9.5L4.75 5.5Z" fill="#606060"/></svg>
<svg style="left:793px;top:31px" width="16" height="17" viewBox="0 0 16 17"><rect x="1.5" y="0.5" width="12.5" height="12.5" fill="#f6f6f6" stroke="#b8b8b8"/><rect x="2" y="1" width="3.5" height="2.2" fill="#9c9c9c"/><path d="M7 3.5H12M6.5 5.5H8M9.5 5.5H12M9 7.5H12M9.5 9.5H12M9.5 11.5H12" stroke="#bababa"/><path d="M2.8 15.8H6.5V9.8H9L4.65 4.8L0.3 9.8H2.8Z" fill="#f8f8f8" stroke="#a4a4a4" stroke-linejoin="round"/></svg>
<svg style="left:816px;top:37px" width="10" height="6" viewBox="0 0 10 6"><path d="M0 0H9.5L4.75 5.5Z" fill="#606060"/></svg>
<svg style="left:833px;top:33px" width="17" height="13" viewBox="0 0 17 13"><g><path d="M2.8 6L8.6 0.6V3.2H15.6Q16.5 3.2 16.5 4.1V7.6Q16.5 8.5 15.6 8.5H8.6V11.8Z" fill="#f8f8f8" stroke="#a8a8a8" stroke-width="1.1" stroke-linejoin="round"/><path d="M2.2 0.2V5M0 2.6H4.4M0.6 0.8L3.8 4.4M3.8 0.8L0.6 4.4" stroke="#8c8c8c" stroke-width="0.8"/></g></svg>
<svg style="left:855px;top:33px" width="17" height="13" viewBox="0 0 17 13"><g transform="translate(17 0) scale(-1 1)"><path d="M2.8 6L8.6 0.6V3.2H15.6Q16.5 3.2 16.5 4.1V7.6Q16.5 8.5 15.6 8.5H8.6V11.8Z" fill="#f8f8f8" stroke="#a8a8a8" stroke-width="1.1" stroke-linejoin="round"/><path d="M2.2 0.2V5M0 2.6H4.4M0.6 0.8L3.8 4.4M3.8 0.8L0.6 4.4" stroke="#8c8c8c" stroke-width="0.8"/></g></svg>
<svg style="left:881px;top:32px" width="16" height="16" viewBox="0 0 16 16"><g><path d="M0.8 7.5L6.5 1.5V4.5H13.5Q14.5 4.5 14.5 5.5V9.5Q14.5 10.5 13.5 10.5H6.5V13.5Z" fill="#fff2b8" stroke="#c8860a" stroke-width="1.3" stroke-linejoin="round"/></g></svg>
<svg style="left:904px;top:37px" width="10" height="6" viewBox="0 0 10 6"><path d="M0 0H9.5L4.75 5.5Z" fill="#000"/></svg>
<svg style="left:923px;top:32px" width="16" height="16" viewBox="0 0 16 16"><g transform="translate(15 0) scale(-1 1)"><path d="M0.8 7.5L6.5 1.5V4.5H13.5Q14.5 4.5 14.5 5.5V9.5Q14.5 10.5 13.5 10.5H6.5V13.5Z" fill="#f8f8f8" stroke="#a8a8a8" stroke-width="1.3" stroke-linejoin="round"/></g></svg>
<svg style="left:946px;top:37px" width="10" height="6" viewBox="0 0 10 6"><path d="M0 0H9.5L4.75 5.5Z" fill="#606060"/></svg>
<div style="left:962px;top:30px;width:1px;height:18px;background:#808080"></div>
<svg style="left:971px;top:31px" width="17" height="16" viewBox="0 0 17 16"><rect x="0.5" y="2.5" width="13" height="12" fill="#e4f3fb" stroke="#8d7d55"/><rect x="0.5" y="2" width="13" height="2.5" fill="#3d8fd6"/><path d="M9 9L16 2" stroke="#444" stroke-width="1"/><ellipse cx="13" cy="3" rx="3" ry="2.2" transform="rotate(-45 13 3)" fill="#2f9a3a"/></svg>
<svg style="left:1824px;top:32px" width="16" height="16" viewBox="0 0 16 16"><circle cx="6" cy="6" r="4.6" fill="none" stroke="#6e6e6e" stroke-width="1.8"/><path d="M9.3 9.3L14.5 14.5" stroke="#6e6e6e" stroke-width="2.2"/></svg>
<svg style="left:1855px;top:32px" width="2" height="15" viewBox="0 0 2 15"><rect x="0" y="0" width="2" height="2" fill="#cfc5b2"/><rect x="0" y="4" width="2" height="2" fill="#cfc5b2"/><rect x="0" y="8" width="2" height="2" fill="#cfc5b2"/><rect x="0" y="12" width="2" height="2" fill="#cfc5b2"/></svg>
<svg style="left:1863px;top:31px" width="16" height="15" viewBox="0 0 16 15"><rect x="0.6" y="2.6" width="12" height="11" rx="1" fill="#e8f6fc" stroke="#8d7d55" stroke-width="1.2"/><rect x="0.5" y="2" width="12" height="2.5" fill="#3d8fd6"/><path d="M4.5 4.5V13.5M0.5 9.5H12.5" stroke="#8d7d55" stroke-width="1.2"/><path d="M7 12L10 10" stroke="#e8c870" stroke-width="0.7"/><path d="M11.5 -0.5L15.8 3.8L11.5 8.1L7.2 3.8Z" fill="#b8901c"/><path d="M11.5 0.7Q12.0 3.3 14.600000000000001 3.8Q12.0 4.3 11.5 6.8999999999999995Q11.0 4.3 8.4 3.8Q11.0 3.3 11.5 0.7Z" fill="#fff8d8"/></svg>
<div style="left:1884px;top:30px;width:1px;height:18px;background:#808080"></div>
<div style="left:1890px;top:28px;width:7px;height:21px;box-sizing:border-box;background:#cce8ff;border:1px solid #99d1ff;border-right:none"></div>
<svg style="left:1891px;top:30px" width="6" height="17" viewBox="0 0 6 17"><path d="M3 1H6V7H4Z" fill="#6a3018"/><circle cx="6.5" cy="10.5" r="4" fill="#3a9a4a"/><circle cx="5.5" cy="9" r="1.5" fill="#8cd08c"/></svg>
<svg style="left:5px;top:61px" width="12" height="14" viewBox="0 0 12 14"><path d="M1.5 0V13M1.5 3.5H5M1.5 9.5H5" stroke="#5a6a80" stroke-width="1.2"/><rect x="4.5" y="1.2" width="5" height="4.6" rx="0.6" fill="#b8682a"/><rect x="4.5" y="7.2" width="5" height="4.6" rx="0.6" fill="#b8682a"/><path d="M7 1V6M4.5 3.5H9.5M7 7V12M4.5 9.5H9.5" stroke="#7a3a10" stroke-width="0.6"/></svg>
<svg style="left:145px;top:60px" width="16" height="16" viewBox="0 0 16 16"><path d="M0.5 0.5H6L8.5 3V12.5H0.5Z" fill="#f6f6f0" stroke="#b0a070"/><path d="M2 3.5H5.5M2 5.5H6M2 7.5H5M2 9.5H4.5" stroke="#6a9ad8" stroke-width="0.9"/><path d="M5.5 7.5H9L10 6.5H14.5V14.5H5.5Z" fill="#f8d77a" stroke="#b67a2a"/><rect x="6" y="9" width="8" height="5" fill="#fbe39a"/></svg>
<svg style="left:279px;top:65px" width="10" height="10" viewBox="0 0 10 10"><path d="M0.6 0.6L9.4 9.4M9.4 0.6L0.6 9.4" stroke="#1a1a1a" stroke-width="0.95"/></svg>
<svg style="left:302px;top:59px" width="14" height="14" viewBox="0 0 14 14"><rect x="0.5" y="0.5" width="10" height="10" fill="#e6f2fb" stroke="#8ea0c4"/><rect x="2.5" y="2.5" width="10.5" height="10.5" fill="#d8eefa" stroke="#8ea0c4"/><path d="M4.5 8H11" stroke="#1d4f8a" stroke-width="1.3"/></svg>
<svg style="left:323px;top:58px" width="17" height="16" viewBox="0 0 17 16"><path d="M0.8 4.2L4.5 0.8V2.8H11V5.6H4.5V7.6Z" fill="#fde7a8" stroke="#c8860a" stroke-linejoin="round"/><path d="M15.5 11.2L11.8 7.8V9.8H4V12.6H11.8V14.6Z" fill="#fde7a8" stroke="#c8860a" stroke-linejoin="round"/></svg>
<svg style="left:347px;top:59px" width="14" height="15" viewBox="0 0 14 15"><path d="M0.5 0.5H13L8.5 6.5V12.5L5 14.5V6.5Z" fill="#d6ecf9" stroke="#7f92b8"/></svg>
<div style="left:368px;top:57px;width:1px;height:18px;background:#808080"></div>
<svg style="left:379px;top:59px" width="14" height="14" viewBox="0 0 14 14"><circle cx="3.5" cy="3.2" r="2.9" fill="#c4c4c4"/><circle cx="10.2" cy="5.2" r="3" fill="#b8b8b8"/><circle cx="4.6" cy="9.6" r="3.5" fill="#9c9c9c"/></svg>
<svg style="left:406px;top:58px" width="6" height="15" viewBox="0 0 6 15"><circle cx="2.75" cy="2.6" r="1.75" fill="none" stroke="#606060" stroke-width="1"/><circle cx="2.75" cy="7.5" r="1.75" fill="none" stroke="#606060" stroke-width="1"/><circle cx="2.75" cy="12.4" r="1.75" fill="none" stroke="#606060" stroke-width="1"/></svg>
<svg style="left:426px;top:61px" width="10" height="4" viewBox="0 0 10 4"><rect x="0" y="0" width="10" height="4" fill="#000"/><rect x="1" y="1" width="8" height="2" fill="#fff"/></svg>
<svg style="left:449px;top:61px" width="10" height="10" viewBox="0 0 10 10"><rect x="0" y="0" width="10" height="10" fill="#000"/><rect x="1" y="1" width="8" height="1" fill="#fff"/><rect x="1" y="3" width="8" height="6" fill="#eaeaea"/></svg>
<svg style="left:482px;top:62px" width="12" height="15" viewBox="0 0 12 15"><path d="M0.5 0.5H7.5L10.5 3.5V13.5H0.5Z" fill="#eef4fb" stroke="#9b7b36"/><path d="M7.5 0.5V3.5H10.5" fill="#f6e6b0" stroke="#c8a860" stroke-width="0.8"/><path d="M6.3 3.5V8.8Q6.3 11 4 11Q3 11 2.5 10.4" stroke="#2f6aa8" stroke-width="1.7" fill="none"/></svg>
<svg style="left:617px;top:62px" width="12" height="15" viewBox="0 0 12 15"><path d="M0.5 0.5H7.5L10.5 3.5V13.5H0.5Z" fill="#eef4fb" stroke="#9b7b36"/><path d="M7.5 0.5V3.5H10.5" fill="#f6e6b0" stroke="#c8a860" stroke-width="0.8"/><path d="M6.3 3.5V8.8Q6.3 11 4 11Q3 11 2.5 10.4" stroke="#2f6aa8" stroke-width="1.7" fill="none"/></svg>
<svg style="left:768px;top:62px" width="12" height="15" viewBox="0 0 12 15"><path d="M0.5 0.5H7.5L10.5 3.5V13.5H0.5Z" fill="#eef4fb" stroke="#9b7b36"/><path d="M7.5 0.5V3.5H10.5" fill="#f6e6b0" stroke="#c8a860" stroke-width="0.8"/><path d="M6.3 3.5V8.8Q6.3 11 4 11Q3 11 2.5 10.4" stroke="#2f6aa8" stroke-width="1.7" fill="none"/></svg>
<svg style="left:902px;top:62px" width="12" height="15" viewBox="0 0 12 15"><path d="M0.5 0.5H7.5L10.5 3.5V13.5H0.5Z" fill="#eef4fb" stroke="#9b7b36"/><path d="M7.5 0.5V3.5H10.5" fill="#f6e6b0" stroke="#c8a860" stroke-width="0.8"/><path d="M6.3 3.5V8.8Q6.3 11 4 11Q3 11 2.5 10.4" stroke="#2f6aa8" stroke-width="1.7" fill="none"/></svg>
<svg style="left:1044px;top:62px" width="12" height="15" viewBox="0 0 12 15"><path d="M0.5 0.5H7.5L10.5 3.5V13.5H0.5Z" fill="#eef4fb" stroke="#9b7b36"/><path d="M7.5 0.5V3.5H10.5" fill="#f6e6b0" stroke="#c8a860" stroke-width="0.8"/><path d="M6.3 3.5V8.8Q6.3 11 4 11Q3 11 2.5 10.4" stroke="#2f6aa8" stroke-width="1.7" fill="none"/></svg>
<svg style="left:1180px;top:62px" width="12" height="15" viewBox="0 0 12 15"><path d="M0.5 0.5H7.5L10.5 3.5V13.5H0.5Z" fill="#eef4fb" stroke="#9b7b36"/><path d="M7.5 0.5V3.5H10.5" fill="#f6e6b0" stroke="#c8a860" stroke-width="0.8"/><path d="M6.3 3.5V8.8Q6.3 11 4 11Q3 11 2.5 10.4" stroke="#2f6aa8" stroke-width="1.7" fill="none"/></svg>
<svg style="left:1324px;top:62px" width="12" height="15" viewBox="0 0 12 15"><path d="M0.5 0.5H7.5L10.5 3.5V13.5H0.5Z" fill="#eef4fb" stroke="#9b7b36"/><path d="M7.5 0.5V3.5H10.5" fill="#f6e6b0" stroke="#c8a860" stroke-width="0.8"/><path d="M6.3 3.5V8.8Q6.3 11 4 11Q3 11 2.5 10.4" stroke="#2f6aa8" stroke-width="1.7" fill="none"/></svg>
<svg style="left:1465px;top:62px" width="12" height="15" viewBox="0 0 12 15"><path d="M0.5 0.5H7.5L10.5 3.5V13.5H0.5Z" fill="#eef4fb" stroke="#9b7b36"/><path d="M7.5 0.5V3.5H10.5" fill="#f6e6b0" stroke="#c8a860" stroke-width="0.8"/><path d="M6.3 3.5V8.8Q6.3 11 4 11Q3 11 2.5 10.4" stroke="#2f6aa8" stroke-width="1.7" fill="none"/></svg>
<svg style="left:1571px;top:62px" width="12" height="15" viewBox="0 0 12 15"><path d="M0.5 0.5H7.5L10.5 3.5V13.5H0.5Z" fill="#eef4fb" stroke="#9b7b36"/><path d="M7.5 0.5V3.5H10.5" fill="#f6e6b0" stroke="#c8a860" stroke-width="0.8"/><path d="M6.3 3.5V8.8Q6.3 11 4 11Q3 11 2.5 10.4" stroke="#2f6aa8" stroke-width="1.7" fill="none"/></svg>
<svg style="left:593px;top:65px" width="10" height="10" viewBox="0 0 10 10"><path d="M0.6 0.6L9.4 9.4M9.4 0.6L0.6 9.4" stroke="#1a1a1a" stroke-width="0.95"/></svg>
<svg style="left:1713px;top:59px" width="14" height="17" viewBox="0 0 14 17"><path d="M0.5 0.8L3.5 3.3L0.5 5.8M4 0.8L7 3.3L4 5.8" stroke="#000" stroke-width="1.4" fill="none"/><text x="10" y="15.5" font-size="10" font-family="Liberation Sans" fill="#222" text-anchor="middle">7</text></svg>
<svg style="left:1850px;top:61px" width="10" height="4" viewBox="0 0 10 4"><rect x="0" y="0" width="10" height="4" fill="#000"/><rect x="1" y="1" width="8" height="2" fill="#fff"/></svg>
<svg style="left:1873px;top:61px" width="10" height="10" viewBox="0 0 10 10"><rect x="0" y="0" width="10" height="10" fill="#000"/><rect x="1" y="1" width="8" height="1" fill="#fff"/><rect x="1" y="3" width="8" height="6" fill="#eaeaea"/></svg>
<svg style="left:479px;top:753px" width="15" height="15" viewBox="0 0 15 15"><path d="M0.5 0.5H11Q14 0.5 14 3.5V14.5H0.5Z" fill="#eef6fc" stroke="#8a8a6a"/><path d="M9.5 0.5V14.5" stroke="#9ab0d0"/><circle cx="4.8" cy="4.2" r="2.6" fill="#e02020"/><path d="M2.5 14V11.5L4.8 8.5L7 11.5V14Z" fill="#f8b020"/></svg>
<svg style="left:573px;top:754px" width="11" height="11" viewBox="0 0 11 11"><text x="5.5" y="9" font-size="11" text-anchor="middle" fill="#3a7ab8" font-family="Liberation Sans" font-style="italic">@</text></svg>
<svg style="left:653px;top:752px" width="15" height="16" viewBox="0 0 15 16"><path d="M0.5 0.5H7.5L10.5 3.5V13.5H0.5Z" fill="#f4f6fb" stroke="#b0a060"/><text x="5" y="9" font-size="7" text-anchor="middle" fill="#3a6ab0" font-family="Liberation Sans">{=</text><path d="M6 12.5H11V10.5L14 13L11 15.5V13.5" fill="#f8c040" stroke="#c88a1a" stroke-width="0.8"/></svg>
<svg style="left:762px;top:754px" width="14" height="14" viewBox="0 0 14 14"><rect x="0.75" y="0.75" width="12.5" height="9.5" rx="1" fill="#eaf6fd" stroke="#3767b8" stroke-width="1.5"/><rect x="3" y="4" width="4" height="1" fill="#3767b8"/><rect x="3" y="6" width="7" height="1" fill="#3767b8"/><rect x="4" y="11" width="6" height="1.5" fill="#3767b8"/><rect x="1" y="12" width="12" height="1.5" rx="0.7" fill="#3767b8"/></svg>
<svg style="left:841px;top:756px" width="10" height="10" viewBox="0 0 10 10"><path d="M0.6 0.6L9.4 9.4M9.4 0.6L0.6 9.4" stroke="#1a1a1a" stroke-width="0.95"/></svg>
<svg style="left:1742px;top:751px" width="15" height="14" viewBox="0 0 15 14"><rect x="0.5" y="3.5" width="12" height="10" fill="#eaeaea" stroke="#b8b8b8"/><rect x="0.5" y="3.5" width="12" height="2" fill="#c8c8c8"/><path d="M6 10L12 4" stroke="#999"/><circle cx="12" cy="3" r="2.2" fill="#999"/></svg>
<svg style="left:1766px;top:751px" width="14" height="14" viewBox="0 0 14 14"><rect x="0.75" y="0.75" width="12.5" height="9.5" rx="1" fill="#f0f0f0" stroke="#8a8a8a" stroke-width="1.5"/><rect x="3" y="4" width="5" height="1" fill="#8a8a8a"/><rect x="3" y="6" width="7" height="1" fill="#8a8a8a"/><rect x="2" y="12" width="10" height="1.5" fill="#8a8a8a"/></svg>
<svg style="left:1788px;top:756px" width="10" height="6" viewBox="0 0 10 6"><path d="M0 0H9.5L4.75 5.5Z" fill="#707070"/></svg>
<svg style="left:1807px;top:750px" width="16" height="16" viewBox="0 0 16 16"><rect x="0.5" y="2.5" width="13" height="12" fill="#eef8fd" stroke="#8d7d55"/><rect x="0.5" y="2" width="13" height="2.5" fill="#3d8fd6"/><path d="M3 14Q10 13 12 7" stroke="#f2dc8a" stroke-width="1.2" fill="none"/><path d="M12 -0.7999999999999998L16.3 3.5L12 7.8L7.7 3.5Z" fill="#b8901c"/><path d="M12 0.40000000000000013Q12.5 3.0 15.100000000000001 3.5Q12.5 4.0 12 6.6Q11.5 4.0 8.9 3.5Q11.5 3.0 12 0.40000000000000013Z" fill="#fff8d8"/></svg>
<svg style="left:1830px;top:756px" width="10" height="6" viewBox="0 0 10 6"><path d="M0 0H9.5L4.75 5.5Z" fill="#000"/></svg>
<svg style="left:1850px;top:753px" width="10" height="4" viewBox="0 0 10 4"><rect x="0" y="0" width="10" height="4" fill="#000"/><rect x="1" y="1" width="8" height="2" fill="#fff"/></svg>
<svg style="left:1873px;top:753px" width="9" height="9" viewBox="0 0 9 9"><path d="M3.5 3V0.5H8.5V4.5H6" fill="none" stroke="#000" stroke-width="1.2"/><rect x="0.6" y="4" width="5.4" height="4.4" fill="#fff" stroke="#000" stroke-width="1.2"/><rect x="0.6" y="4" width="5.4" height="1.2" fill="#000"/></svg>
<svg style="left:4px;top:93px" width="10" height="6" viewBox="0 0 10 6"><path d="M0.8 0.8L4.75 4.8L8.7 0.8" stroke="#333" stroke-width="1.5" fill="none"/></svg>
<div style="left:21px;top:83px;width:70px;height:23px;border:1px dotted #000;box-sizing:border-box;background:transparent"></div>
<svg style="left:21px;top:86px" width="17" height="17" viewBox="0 0 17 17"><path d="M2.5 3.5H7L8 4.5H10V9H2.5Z" fill="#fbe7a6" stroke="#c49a3a"/><path d="M1 13.5L4 8.5H15.5L12.5 13.5Z" fill="#8dbbf0" stroke="#4f7fc8"/><path d="M12.5 0V4.5Q12.5 6 11 6Q10 6 9.5 5.3" stroke="#3a6ab0" stroke-width="1.3" fill="none"/></svg>
<svg style="left:21px;top:95px" width="8" height="8" viewBox="0 0 8 8"><path d="M4 0.6Q4.6 0.6 5 1.3L7.6 6.3Q7.9 7.5 6.8 7.5H1.2Q0.1 7.5 0.4 6.3L3 1.3Q3.4 0.6 4 0.6Z" fill="#f8cf5a" stroke="#d9952a" stroke-width="0.8"/><path d="M4 2.3V4.8M4 5.6V6.6" stroke="#3a2a10" stroke-width="1"/></svg>
<svg style="left:27px;top:113px" width="6" height="10" viewBox="0 0 6 10"><path d="M0.8 0.8L4.8 4.75L0.8 8.7" stroke="#a4a4a4" stroke-width="1.5" fill="none"/></svg>
<svg style="left:42px;top:112px" width="16" height="12" viewBox="0 0 16 12"><rect x="0" y="2" width="7" height="2" fill="#2f86c4"/><rect x="0" y="5" width="9" height="3" fill="#3aa080"/><rect x="0" y="8.5" width="10" height="3" fill="#c87a3a"/><path d="M10 0.5L15 11.5" stroke="#d8a030" stroke-width="2.2"/></svg>
<svg style="left:24px;top:139px" width="10" height="6" viewBox="0 0 10 6"><path d="M0.8 0.8L4.75 4.8L8.7 0.8" stroke="#333" stroke-width="1.5" fill="none"/></svg>
<svg style="left:41px;top:133px" width="17" height="15" viewBox="0 0 17 15"><path d="M1.5 4.5H5L6 3.5H13V12.5H1.5Z" fill="#fbe7a6" stroke="#c49a3a"/><path d="M1 12.5L4 7.5H15.5L12.5 12.5Z" fill="#fdedb6" stroke="#c49a3a"/><rect x="7.5" y="0.5" width="6" height="5.5" fill="#e9d0a0" stroke="#6a4a28"/><path d="M10.5 0V6.5M7 3.2H14" stroke="#6a4a28"/></svg>
<svg style="left:41px;top:140px" width="8" height="8" viewBox="0 0 8 8"><path d="M4 0.6Q4.6 0.6 5 1.3L7.6 6.3Q7.9 7.5 6.8 7.5H1.2Q0.1 7.5 0.4 6.3L3 1.3Q3.4 0.6 4 0.6Z" fill="#f8cf5a" stroke="#d9952a" stroke-width="0.8"/><path d="M4 2.3V4.8M4 5.6V6.6" stroke="#3a2a10" stroke-width="1"/></svg>
<svg style="left:44px;top:162px" width="10" height="6" viewBox="0 0 10 6"><path d="M0.8 0.8L4.75 4.8L8.7 0.8" stroke="#333" stroke-width="1.5" fill="none"/></svg>
<svg style="left:61px;top:157px" width="16" height="15" viewBox="0 0 16 15"><rect x="3.5" y="1.5" width="11" height="11" fill="#e9d0a0" stroke="#9a5a30"/><path d="M9 0V14.5M2 7H15.5" stroke="#6a4020" stroke-width="1"/></svg>
<svg style="left:61px;top:164px" width="8" height="8" viewBox="0 0 8 8"><path d="M4 0.6Q4.6 0.6 5 1.3L7.6 6.3Q7.9 7.5 6.8 7.5H1.2Q0.1 7.5 0.4 6.3L3 1.3Q3.4 0.6 4 0.6Z" fill="#f8cf5a" stroke="#d9952a" stroke-width="0.8"/><path d="M4 2.3V4.8M4 5.6V6.6" stroke="#3a2a10" stroke-width="1"/></svg>
<svg style="left:67px;top:183px" width="6" height="10" viewBox="0 0 6 10"><path d="M0.8 0.8L4.8 4.75L0.8 8.7" stroke="#a4a4a4" stroke-width="1.5" fill="none"/></svg>
<svg style="left:84px;top:179px" width="12" height="15" viewBox="0 0 12 15"><path d="M0.5 0.5H7.5L10.5 3.5V13.5H0.5Z" fill="#eef4fb" stroke="#9b7b36"/><path d="M7.5 0.5V3.5H10.5" fill="#f6e6b0" stroke="#c8a860" stroke-width="0.8"/><path d="M6.3 3.5V8.8Q6.3 11 4 11Q3 11 2.5 10.4" stroke="#2f6aa8" stroke-width="1.7" fill="none"/></svg>
<svg style="left:67px;top:206px" width="6" height="10" viewBox="0 0 6 10"><path d="M0.8 0.8L4.8 4.75L0.8 8.7" stroke="#a4a4a4" stroke-width="1.5" fill="none"/></svg>
<svg style="left:84px;top:202px" width="12" height="15" viewBox="0 0 12 15"><path d="M0.5 0.5H7.5L10.5 3.5V13.5H0.5Z" fill="#eef4fb" stroke="#9b7b36"/><path d="M7.5 0.5V3.5H10.5" fill="#f6e6b0" stroke="#c8a860" stroke-width="0.8"/><path d="M6.3 3.5V8.8Q6.3 11 4 11Q3 11 2.5 10.4" stroke="#2f6aa8" stroke-width="1.7" fill="none"/></svg>
<svg style="left:67px;top:229px" width="6" height="10" viewBox="0 0 6 10"><path d="M0.8 0.8L4.8 4.75L0.8 8.7" stroke="#a4a4a4" stroke-width="1.5" fill="none"/></svg>
<svg style="left:84px;top:225px" width="12" height="15" viewBox="0 0 12 15"><path d="M0.5 0.5H7.5L10.5 3.5V13.5H0.5Z" fill="#eef4fb" stroke="#9b7b36"/><path d="M7.5 0.5V3.5H10.5" fill="#f6e6b0" stroke="#c8a860" stroke-width="0.8"/><path d="M6.3 3.5V8.8Q6.3 11 4 11Q3 11 2.5 10.4" stroke="#2f6aa8" stroke-width="1.7" fill="none"/></svg>
<svg style="left:67px;top:252px" width="6" height="10" viewBox="0 0 6 10"><path d="M0.8 0.8L4.8 4.75L0.8 8.7" stroke="#a4a4a4" stroke-width="1.5" fill="none"/></svg>
<svg style="left:84px;top:248px" width="12" height="15" viewBox="0 0 12 15"><path d="M0.5 0.5H7.5L10.5 3.5V13.5H0.5Z" fill="#eef4fb" stroke="#9b7b36"/><path d="M7.5 0.5V3.5H10.5" fill="#f6e6b0" stroke="#c8a860" stroke-width="0.8"/><path d="M6.3 3.5V8.8Q6.3 11 4 11Q3 11 2.5 10.4" stroke="#2f6aa8" stroke-width="1.7" fill="none"/></svg>
<svg style="left:67px;top:275px" width="6" height="10" viewBox="0 0 6 10"><path d="M0.8 0.8L4.8 4.75L0.8 8.7" stroke="#a4a4a4" stroke-width="1.5" fill="none"/></svg>
<svg style="left:84px;top:271px" width="12" height="15" viewBox="0 0 12 15"><path d="M0.5 0.5H7.5L10.5 3.5V13.5H0.5Z" fill="#eef4fb" stroke="#9b7b36"/><path d="M7.5 0.5V3.5H10.5" fill="#f6e6b0" stroke="#c8a860" stroke-width="0.8"/><path d="M6.3 3.5V8.8Q6.3 11 4 11Q3 11 2.5 10.4" stroke="#2f6aa8" stroke-width="1.7" fill="none"/></svg>
<svg style="left:67px;top:298px" width="6" height="10" viewBox="0 0 6 10"><path d="M0.8 0.8L4.8 4.75L0.8 8.7" stroke="#a4a4a4" stroke-width="1.5" fill="none"/></svg>
<svg style="left:84px;top:294px" width="12" height="15" viewBox="0 0 12 15"><path d="M0.5 0.5H7.5L10.5 3.5V13.5H0.5Z" fill="#eef4fb" stroke="#9b7b36"/><path d="M7.5 0.5V3.5H10.5" fill="#f6e6b0" stroke="#c8a860" stroke-width="0.8"/><path d="M6.3 3.5V8.8Q6.3 11 4 11Q3 11 2.5 10.4" stroke="#2f6aa8" stroke-width="1.7" fill="none"/></svg>
<svg style="left:67px;top:321px" width="6" height="10" viewBox="0 0 6 10"><path d="M0.8 0.8L4.8 4.75L0.8 8.7" stroke="#a4a4a4" stroke-width="1.5" fill="none"/></svg>
<svg style="left:84px;top:317px" width="12" height="15" viewBox="0 0 12 15"><path d="M0.5 0.5H7.5L10.5 3.5V13.5H0.5Z" fill="#eef4fb" stroke="#9b7b36"/><path d="M7.5 0.5V3.5H10.5" fill="#f6e6b0" stroke="#c8a860" stroke-width="0.8"/><path d="M6.3 3.5V8.8Q6.3 11 4 11Q3 11 2.5 10.4" stroke="#2f6aa8" stroke-width="1.7" fill="none"/></svg>
<svg style="left:90px;top:314px" width="8" height="8" viewBox="0 0 8 8"><circle cx="4" cy="4" r="3.6" fill="#9a5a2a"/><path d="M2.8 2H5.4M2.8 4H5M2.8 6H5.4M3 1.8V6.2" stroke="#fff" stroke-width="1"/></svg>
<svg style="left:67px;top:344px" width="6" height="10" viewBox="0 0 6 10"><path d="M0.8 0.8L4.8 4.75L0.8 8.7" stroke="#a4a4a4" stroke-width="1.5" fill="none"/></svg>
<svg style="left:84px;top:340px" width="12" height="15" viewBox="0 0 12 15"><path d="M0.5 0.5H7.5L10.5 3.5V13.5H0.5Z" fill="#eef4fb" stroke="#9b7b36"/><path d="M7.5 0.5V3.5H10.5" fill="#f6e6b0" stroke="#c8a860" stroke-width="0.8"/><path d="M6.3 3.5V8.8Q6.3 11 4 11Q3 11 2.5 10.4" stroke="#2f6aa8" stroke-width="1.7" fill="none"/></svg>
<svg style="left:81px;top:347px" width="8" height="8" viewBox="0 0 8 8"><path d="M4 0.6Q4.6 0.6 5 1.3L7.6 6.3Q7.9 7.5 6.8 7.5H1.2Q0.1 7.5 0.4 6.3L3 1.3Q3.4 0.6 4 0.6Z" fill="#f8cf5a" stroke="#d9952a" stroke-width="0.8"/><path d="M4 2.3V4.8M4 5.6V6.6" stroke="#3a2a10" stroke-width="1"/></svg>
<svg style="left:67px;top:367px" width="6" height="10" viewBox="0 0 6 10"><path d="M0.8 0.8L4.8 4.75L0.8 8.7" stroke="#a4a4a4" stroke-width="1.5" fill="none"/></svg>
<svg style="left:84px;top:363px" width="12" height="15" viewBox="0 0 12 15"><path d="M0.5 0.5H7.5L10.5 3.5V13.5H0.5Z" fill="#eef4fb" stroke="#9b7b36"/><path d="M7.5 0.5V3.5H10.5" fill="#f6e6b0" stroke="#c8a860" stroke-width="0.8"/><path d="M6.3 3.5V8.8Q6.3 11 4 11Q3 11 2.5 10.4" stroke="#2f6aa8" stroke-width="1.7" fill="none"/></svg>
<svg style="left:67px;top:390px" width="6" height="10" viewBox="0 0 6 10"><path d="M0.8 0.8L4.8 4.75L0.8 8.7" stroke="#a4a4a4" stroke-width="1.5" fill="none"/></svg>
<svg style="left:84px;top:386px" width="12" height="15" viewBox="0 0 12 15"><path d="M0.5 0.5H7.5L10.5 3.5V13.5H0.5Z" fill="#eef4fb" stroke="#9b7b36"/><path d="M7.5 0.5V3.5H10.5" fill="#f6e6b0" stroke="#c8a860" stroke-width="0.8"/><path d="M6.3 3.5V8.8Q6.3 11 4 11Q3 11 2.5 10.4" stroke="#2f6aa8" stroke-width="1.7" fill="none"/></svg>
<svg style="left:67px;top:413px" width="6" height="10" viewBox="0 0 6 10"><path d="M0.8 0.8L4.8 4.75L0.8 8.7" stroke="#a4a4a4" stroke-width="1.5" fill="none"/></svg>
<svg style="left:84px;top:409px" width="12" height="15" viewBox="0 0 12 15"><path d="M0.5 0.5H7.5L10.5 3.5V13.5H0.5Z" fill="#eef4fb" stroke="#9b7b36"/><path d="M7.5 0.5V3.5H10.5" fill="#f6e6b0" stroke="#c8a860" stroke-width="0.8"/><path d="M6.3 3.5V8.8Q6.3 11 4 11Q3 11 2.5 10.4" stroke="#2f6aa8" stroke-width="1.7" fill="none"/></svg>
<svg style="left:67px;top:436px" width="6" height="10" viewBox="0 0 6 10"><path d="M0.8 0.8L4.8 4.75L0.8 8.7" stroke="#a4a4a4" stroke-width="1.5" fill="none"/></svg>
<svg style="left:84px;top:432px" width="12" height="15" viewBox="0 0 12 15"><path d="M0.5 0.5H7.5L10.5 3.5V13.5H0.5Z" fill="#eef4fb" stroke="#9b7b36"/><path d="M7.5 0.5V3.5H10.5" fill="#f6e6b0" stroke="#c8a860" stroke-width="0.8"/><path d="M6.3 3.5V8.8Q6.3 11 4 11Q3 11 2.5 10.4" stroke="#2f6aa8" stroke-width="1.7" fill="none"/></svg>
<svg style="left:67px;top:459px" width="6" height="10" viewBox="0 0 6 10"><path d="M0.8 0.8L4.8 4.75L0.8 8.7" stroke="#a4a4a4" stroke-width="1.5" fill="none"/></svg>
<svg style="left:84px;top:455px" width="12" height="15" viewBox="0 0 12 15"><path d="M0.5 0.5H7.5L10.5 3.5V13.5H0.5Z" fill="#eef4fb" stroke="#9b7b36"/><path d="M7.5 0.5V3.5H10.5" fill="#f6e6b0" stroke="#c8a860" stroke-width="0.8"/><path d="M6.3 3.5V8.8Q6.3 11 4 11Q3 11 2.5 10.4" stroke="#2f6aa8" stroke-width="1.7" fill="none"/></svg>
<svg style="left:47px;top:481px" width="6" height="10" viewBox="0 0 6 10"><path d="M0.8 0.8L4.8 4.75L0.8 8.7" stroke="#a4a4a4" stroke-width="1.5" fill="none"/></svg>
<svg style="left:64px;top:478px" width="12" height="15" viewBox="0 0 12 15"><path d="M0.5 0.5H7.5L10.5 3.5V13.5H0.5Z" fill="#eef4fb" stroke="#9b7b36"/><path d="M7.5 0.5V3.5H10.5" fill="#f6e6b0" stroke="#c8a860" stroke-width="0.8"/><path d="M6.3 3.5V8.8Q6.3 11 4 11Q3 11 2.5 10.4" stroke="#2f6aa8" stroke-width="1.7" fill="none"/></svg>
<svg style="left:475px;top:203px" width="12" height="20" viewBox="0 0 12 20"><defs><pattern id="chk" width="2" height="2" patternUnits="userSpaceOnUse"><rect width="1" height="1" fill="#1a6fd6"/><rect x="1" y="1" width="1" height="1" fill="#1a6fd6"/><rect x="1" y="0" width="1" height="1" fill="#cfe2f8"/><rect x="0" y="1" width="1" height="1" fill="#cfe2f8"/></pattern></defs><rect width="12" height="20" fill="url(#chk)"/><rect width="12" height="1" fill="#1a6fd6"/><rect y="19" width="12" height="1" fill="#1a6fd6"/></svg>
<svg style="left:513px;top:388px" width="10" height="10" viewBox="0 0 10 10"><circle cx="4.5" cy="4.5" r="3.8" fill="#fff" stroke="#9a9a9a"/><path d="M2.5 4.5H6.5" stroke="#666"/></svg>
<svg style="left:1864px;top:90px" width="11" height="7" viewBox="0 0 11 7"><path d="M0.8 6L5.5 1.2L10.2 6" stroke="#505050" stroke-width="1.8" fill="none"/></svg>
<svg style="left:1864px;top:705px" width="11" height="7" viewBox="0 0 11 7"><path d="M0.8 1L5.5 5.8L10.2 1" stroke="#505050" stroke-width="1.8" fill="none"/></svg>
<svg style="left:530px;top:725px" width="7" height="10" viewBox="0 0 7 10"><path d="M6 0.8L1.2 5L6 9.2" stroke="#b0b0b0" stroke-width="1.6" fill="none"/></svg>
<svg style="left:1845px;top:725px" width="7" height="10" viewBox="0 0 7 10"><path d="M1 0.8L5.8 5L1 9.2" stroke="#b0b0b0" stroke-width="1.6" fill="none"/></svg>
</body></html>
